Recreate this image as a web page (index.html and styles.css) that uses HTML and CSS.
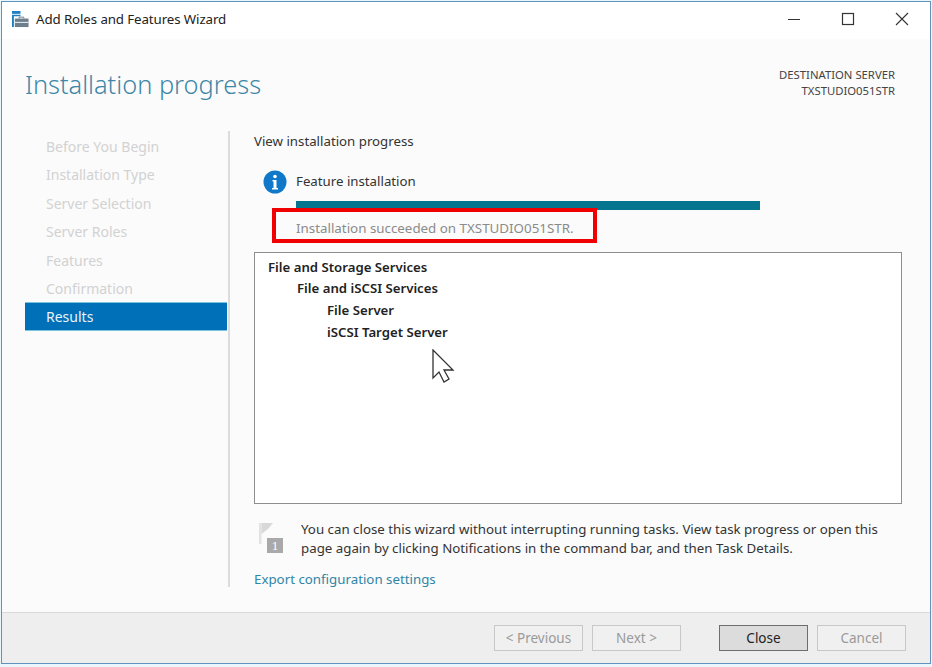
FILE: index.html
```html
<!DOCTYPE html>
<html lang="en">
<head>
    <meta charset="UTF-8">
    <title>Add Roles and Features Wizard</title>
    <link rel="stylesheet" href="styles.css">
</head>
<body>
    <div class="window">
        <div class="titlebar">
            <svg class="app-icon" width="17" height="17" viewBox="0 0 18 18">
                <rect x="0" y="0" width="9" height="3" fill="#1f7fc4"/>
                <path d="M0 4h9v1.500H2V17H0z" fill="#1f7fc4"/>
                <path d="M3 8h14.500v9H3z" fill="#6d7f8c"/>
                <path d="M3 11.500h14.500v1.200H3z" fill="#dfe5ea"/>
                <path d="M7.500 8V6.500h5V8" fill="none" stroke="#6d7f8c" stroke-width="1"/>
            </svg>
            <span class="window-title">Add Roles and Features Wizard</span>
            <div class="window-controls">
                <svg width="14" height="14" viewBox="0 0 14 14"><path d="M1 7.500h12" stroke="#333" stroke-width="1"/></svg>
                <svg width="14" height="14" viewBox="0 0 14 14"><rect x="1.500" y="1.500" width="11" height="11" fill="none" stroke="#333" stroke-width="1.200"/></svg>
                <svg width="14" height="14" viewBox="0 0 14 14"><path d="M1 1l12 12M13 1L1 13" stroke="#333" stroke-width="1.100"/></svg>
            </div>
        </div>

        <div class="page-head">
            <h1>Installation progress</h1>
            <div class="destination">DESTINATION SERVER<br>TXSTUDIO051STR</div>
        </div>

        <div class="main">
            <ul class="steps">
                <li>Before You Begin</li>
                <li>Installation Type</li>
                <li>Server Selection</li>
                <li>Server Roles</li>
                <li>Features</li>
                <li>Confirmation</li>
                <li class="active">Results</li>
            </ul>

            <div class="content">
                <div class="view-label">View installation progress</div>

                <div class="progress-block">
                    <svg class="info-icon" width="24" height="24" viewBox="0 0 24 24">
                        <circle cx="12" cy="12" r="11.500" fill="#0f78c8"/>
                        <circle cx="12" cy="6.500" r="1.800" fill="#fff"/>
                        <path d="M9.500 10h4v8h1.500v1.500H9V18h1.500v-6.500h-1z" fill="#fff"/>
                    </svg>
                    <div class="progress-body">
                        <div class="feature-label">Feature installation</div>
                        <div class="progress-bar"></div>
                        <div class="status-text">Installation succeeded on TXSTUDIO051STR.</div>
                    </div>
                </div>

                <div class="results-box">
                    <div class="tree-1">File and Storage Services</div>
                    <div class="tree-2">File and iSCSI Services</div>
                    <div class="tree-3">File Server</div>
                    <div class="tree-3">iSCSI Target Server</div>
                </div>

                <div class="note">
                    <svg class="flag-icon" width="26" height="30" viewBox="0 0 26 30">
                        <path d="M1 0h2.500v21H1z" fill="#e2e2e2"/>
                        <path d="M3.500 0H15l-5 6-6.500 5z" fill="#d8d8d8"/>
                        <rect x="9" y="15" width="16" height="15" fill="#a9a9a9"/>
                    </svg>
                    <span class="flag-num">1</span>
                    <p>You can close this wizard without interrupting running tasks. View task progress or open this page again by clicking Notifications in the command bar, and then Task Details.</p>
                </div>

                <a class="export-link" href="#">Export configuration settings</a>
            </div>
        </div>

        <div class="footer">
            <button class="btn" disabled>&lt; Previous</button>
            <button class="btn" disabled>Next &gt;</button>
            <button class="btn btn-close">Close</button>
            <button class="btn" disabled>Cancel</button>
        </div>

        <!-- annotation and mouse pointer sit on top of the dialog -->
        <div class="highlight"></div>
        <svg class="pointer" width="24" height="35" viewBox="0 0 24 35">
            <path d="M1 1v28l6-6 5 10 5-3-5-9h9z" fill="#fff" stroke="#333" stroke-width="1.300"/>
        </svg>
    </div>
</body>
</html>
```

FILE: styles.css
```css
* {
    margin: 0;
    padding: 0;
    box-sizing: border-box;
}

body {
    width: 932px;
    height: 667px;
    background: #e9f6fb;
    overflow: hidden;
    font-family: "Noto Sans", sans-serif;
    color: #333;
}

.window {
    position: relative;
    width: 930px;
    height: 663px;
    margin: 1px 0 0 1px;
    border: 1px solid #5f93bd;
    display: flex;
    flex-direction: column;
    background: #fbfbfb;
}

.titlebar {
    height: 37px;
    background: #fff;
    display: flex;
    align-items: center;
    padding: 0 0 3px 10px;
    flex-shrink: 0;
}

.app-icon {
    margin-right: 7px;
}

.window-title {
    font-size: 13.300px;
    color: #222;
    letter-spacing: -0.1px;
}

.window-controls {
    margin-left: auto;
    display: flex;
    gap: 40px;
    padding-right: 21px;
}

.page-head {
    height: 92px;
    display: flex;
    justify-content: space-between;
    flex-shrink: 0;
    padding: 26px 35px 0 23px;
}

.page-head h1 {
    font-size: 25.400px;
    font-weight: 300;
    color: #3d87a8;
    line-height: 38px;
}

.destination {
    font-size: 11.300px;
    line-height: 16px;
    text-align: right;
    color: #444;
    margin-top: 2px;
}

.main {
    flex: 1;
    display: flex;
    min-height: 0;
}

.steps {
    list-style: none;
    width: 202px;
    margin-left: 23px;
    padding-top: 2px;
    flex-shrink: 0;
}

.steps li {
    height: 28.400px;
    line-height: 28px;
    padding-left: 21px;
    font-size: 14px;
    color: #d2d2d2;
}

.steps li.active {
    height: 29px;
    margin-top: -1px;
    background: #0070b8;
    color: #e8f3fa;
    border-top: 1px solid #7cc4dd;
    border-bottom: 1px solid #7cc4dd;
    line-height: 28px;
}

.content {
    flex: 1;
    margin-left: 1px;
    height: 456px;
    border-left: 2px solid #dcdcdc;
    padding: 0 28px 0 24px;
    display: flex;
    flex-direction: column;
}

.view-label {
    font-size: 13.250px;
    line-height: 20px;
}

.progress-block {
    display: flex;
    margin-top: 20px;
}

.info-icon {
    margin: -1px 9px 0 9px;
    flex-shrink: 0;
}

.progress-body {
    width: 464px;
}

.feature-label {
    font-size: 13.250px;
    line-height: 20px;
    height: 30px;
}

.progress-bar {
    height: 9px;
    background: #05748f;
}

.status-text {
    font-size: 13.350px;
    line-height: 20px;
    color: #8b8b8b;
    margin-top: 8px;
}

.results-box {
    margin-top: 14px;
    height: 252px;
    flex-shrink: 0;
    background: #fff;
    border: 1px solid #8e8e8e;
    padding: 4px 13px;
    font-size: 13.200px;
    font-weight: 600;
    color: #222;
    line-height: 21px;
}

.tree-2 {
    padding-left: 29px;
}

.tree-3 {
    padding-left: 59px;
    margin-top: 1px;
}

.note {
    position: relative;
    display: flex;
    margin-top: 16px;
    padding-left: 4px;
}

.flag-icon {
    flex-shrink: 0;
    margin: 3px 17px 0 0;
}

.flag-num {
    position: absolute;
    left: 13px;
    top: 18px;
    width: 16px;
    text-align: center;
    font-size: 13px;
    line-height: 15px;
    color: #fff;
    font-family: "Liberation Serif", serif;
}

.note p {
    font-size: 13.300px;
    line-height: 19px;
    width: 590px;
}

.export-link {
    margin-top: 11px;
    font-size: 13.300px;
    line-height: 20px;
    color: #2f85a6;
    text-decoration: none;
}

.footer {
    height: 51px;
    flex-shrink: 0;
    background: #eeeeee;
    border-top: 1px solid #d8d8d8;
    display: flex;
    justify-content: flex-start;
    padding: 12px 0 0 492px;
    gap: 9px;
}

.btn {
    width: 89px;
    height: 26px;
    border: 1px solid #c8c8c8;
    background: #f0f0f0;
    font-family: inherit;
    font-size: 13.500px;
    color: #9a9a9a;
}

.btn-close {
    margin-left: 29px;
    background: #dcdcdc;
    border-color: #6e6e6e;
    color: #222;
}

.highlight {
    position: absolute;
    left: 270px;
    top: 206px;
    width: 325px;
    height: 35px;
    border: 4px solid #f00000;
}

.pointer {
    position: absolute;
    left: 430px;
    top: 347px;
}
```
